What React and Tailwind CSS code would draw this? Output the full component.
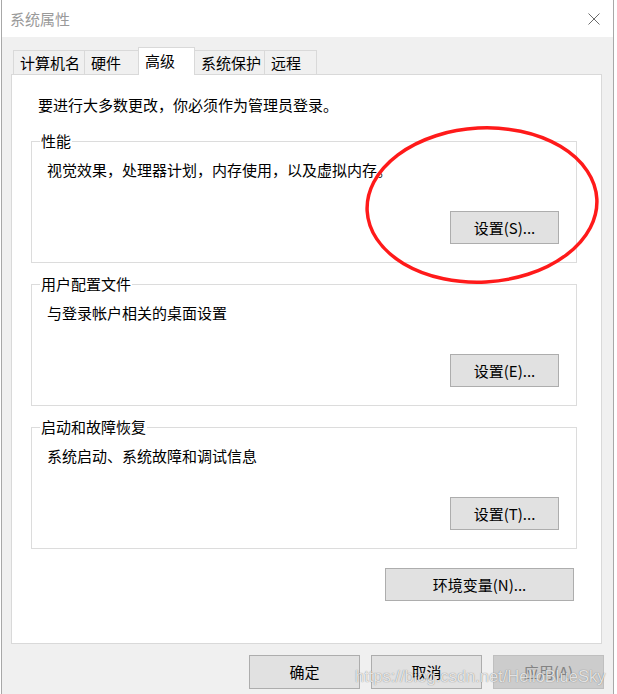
const FONT = { fontFamily: '"Noto Sans CJK SC", "Microsoft YaHei", sans-serif' };

const tabs = [
  { label: '计算机名', w: 'w-[72px]' },
  { label: '硬件', w: 'w-[55px]' },
  { label: '高级', w: 'w-[57px]', active: true },
  { label: '系统保护', w: 'w-[71px]' },
  { label: '远程', w: 'w-[53px]' },
];

const groups = [
  { title: '性能', desc: '视觉效果，处理器计划，内存使用，以及虚拟内存。', button: '设置(S)...', top: 'mt-[16px]' },
  { title: '用户配置文件', desc: '与登录帐户相关的桌面设置', button: '设置(E)...', top: 'mt-[11px]' },
  { title: '启动和故障恢复', desc: '系统启动、系统故障和调试信息', button: '设置(T)...', top: 'mt-[11px]' },
];

function WinButton({ children, className = '', disabled = false }) {
  return (
    <button
      className={`h-[33px] border text-[15px] leading-[20px] flex items-center justify-center ${
        disabled ? 'bg-[#cccccc] border-[#bfbfbf] text-[#838383]' : 'bg-[#e1e1e1] border-[#adadad] text-black'
      } ${className}`}
    >
      {children}
    </button>
  );
}

function GroupBox({ title, desc, button, top }) {
  return (
    <fieldset className={`${top} h-[132px] border border-[#dcdcdc] px-0 pb-0`}>
      <legend className="ml-[8px] px-[1px] text-[15px] leading-[20px] text-black">{title}</legend>
      <p className="pl-[15px] pt-[9px] text-[15px] leading-[20px] text-black whitespace-nowrap">{desc}</p>
      <div className="flex justify-end pr-[17px] mt-[31px]">
        <WinButton className="w-[109px]">{button}</WinButton>
      </div>
    </fieldset>
  );
}

export default function App() {
  return (
    <div className="relative w-[617px] h-[694px] overflow-hidden bg-white" style={FONT}>
      <div className="ml-px w-[613px] h-full flex flex-col border-x border-[#a8a8a8]">
        {/* title bar */}
        <div className="h-[37px] bg-white flex items-center justify-between pl-[8px] pr-[13px]">
          <span className="text-[15px] leading-[20px] text-[#9a9a9a]">系统属性</span>
          <svg width="12" height="12" viewBox="0 0 12 12" className="mt-px">
            <path d="M0.5 0.5 L11.5 11.5 M11.5 0.5 L0.5 11.5" stroke="#6b6b6b" strokeWidth="1" fill="none" />
          </svg>
        </div>

        <div className="flex-1 bg-[#f0f0f0] pl-[9px] pr-[11px]">
          {/* tabs */}
          <div className="relative z-10 flex items-end pt-[10px] pl-[2px] -mb-px">
            {tabs.map((t, i) =>
              t.active ? (
                <div
                  key={t.label}
                  className={`${t.w} h-[28px] -ml-px bg-white border border-b-0 border-[#d9d9d9] pl-[6px] pt-[3px] text-[15px] leading-[20px] text-black`}
                >
                  {t.label}
                </div>
              ) : (
                <div
                  key={t.label}
                  className={`${t.w} h-[25px] ${i > 0 ? '-ml-px' : ''} bg-[#f0f0f0] border border-[#d9d9d9] pl-[6px] pt-[2px] text-[15px] leading-[20px] text-black`}
                >
                  {t.label}
                </div>
              )
            )}
          </div>

          {/* panel */}
          <div className="h-[570px] bg-white border border-[#d9d9d9]">
            <p className="pl-[26px] pt-[20px] text-[15px] leading-[20px] text-black">要进行大多数更改，你必须作为管理员登录。</p>
            <div className="ml-[19px] mr-[24px]">
              {groups.map((g) => (
                <GroupBox key={g.title} {...g} />
              ))}
            </div>
            <div className="flex justify-end pr-[27px] mt-[19px]">
              <WinButton className="w-[189px]">环境变量(N)...</WinButton>
            </div>
          </div>

          {/* dialog buttons */}
          <div className="flex justify-end gap-[11px] mt-[11px] -mr-[2px]">
            <WinButton className="w-[111px] h-[34px]">确定</WinButton>
            <WinButton className="w-[111px] h-[34px]">取消</WinButton>
            <WinButton className="w-[111px] h-[34px]" disabled>
              应用(A)
            </WinButton>
          </div>
        </div>
      </div>

      {/* red annotation ellipse */}
      <svg className="absolute inset-0 pointer-events-none" width="617" height="694" viewBox="0 0 617 694">
        <ellipse
          cx="482"
          cy="205"
          rx="115"
          ry="77"
          transform="rotate(-3 482 205)"
          fill="none"
          stroke="#ff1a1a"
          strokeWidth="3.5"
        />
      </svg>

      {/* watermark */}
      <span
        className="absolute left-[355px] top-[665px] text-[16.5px] leading-[22px] text-white/80 whitespace-nowrap pointer-events-none [text-shadow:0_0_1px_rgba(0,0,0,0.55)]"
        style={{ fontFamily: '"Liberation Sans", Arial, sans-serif' }}
      >
        https://blog.csdn.net/HelloBlueSky
      </span>
    </div>
  );
}
